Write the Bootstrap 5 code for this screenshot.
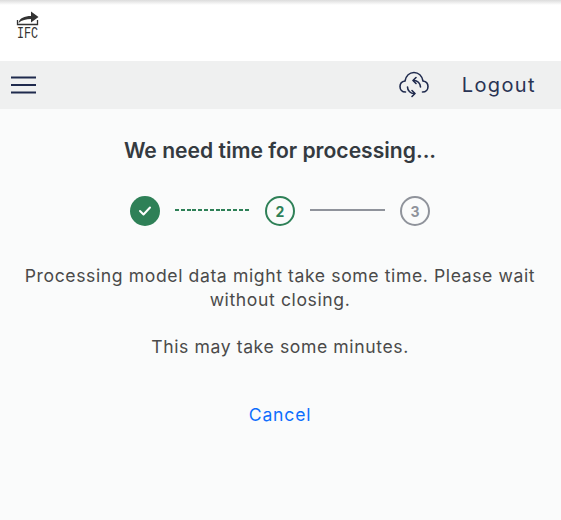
<!DOCTYPE html>
<html lang="en">
<head>
  <meta charset="UTF-8">
  <title>Processing</title>
  <meta name="viewport" content="width=device-width, initial-scale=1">
  <link href="https://cdn.jsdelivr.net/npm/bootstrap@5.3.3/dist/css/bootstrap.min.css" rel="stylesheet">
  <style>
    html, body {
      height: 520px;
      overflow: hidden;
    }

    body {
      font-family: Inter, "Liberation Sans", sans-serif;
      background-color: #fafbfb;
      color: #3b3b3b;
    }

    .top-strip {
      height: 61px;
      background: linear-gradient(#dcdcdc 0, #ffffff 5px);
      padding: 10px 0 0 15px;
    }

    .logo-mark {
      display: block;
      overflow: visible;
    }

    .menu-bar {
      height: 48px;
      background-color: #eff0f0;
      padding: 0 25px 0 11px;
    }

    .burger {
      width: 25px;
      height: 18px;
    }

    .sync-icon {
      width: 30px;
      height: 28px;
      margin-right: 33px;
    }

    .logout-link {
      font-size: 20px;
      letter-spacing: 1.4px;
      color: #2a3454;
      text-decoration: none;
    }

    .page-body {
      padding-right: 1px;
    }

    .page-title {
      font-size: 21.100px;
      font-weight: 600;
      color: #343a40;
      margin: 30px 0 33px;
      line-height: 24px;
    }

    .step-row {
      margin-bottom: 38px;
    }

    .step-dot {
      width: 30px;
      height: 30px;
      border-radius: 50%;
      font-size: 14px;
      font-weight: 700;
    }

    .step-done {
      background-color: #2e8057;
    }

    .step-active {
      border: 2px solid #2e8057;
      color: #2e8057;
    }

    .step-todo {
      border: 2px solid #8f939b;
      color: #8f939b;
    }

    .step-line {
      width: 75px;
      height: 2px;
      margin: 0 15px;
      background-color: #8f939b;
      position: relative;
      top: -1px;
    }

    .step-line-dashed {
      background: repeating-linear-gradient(90deg, #2e8057 0, #2e8057 4px, transparent 4px, transparent 5.800px);
    }

    .body-text {
      font-size: 17.600px;
      letter-spacing: .6px;
      line-height: 24px;
      color: #4a4a4a;
      padding: 0 20px;
    }

    .gap-text {
      margin-bottom: 23px;
    }

    .last-text {
      margin-bottom: 43px;
    }

    .cancel-link {
      font-size: 17.600px;
      letter-spacing: .8px;
      color: #0d6efd;
      text-decoration: none;
    }
  </style>
</head>
<body>

<div class="top-strip">
  <svg class="logo-mark" width="26" height="30" viewBox="0 0 26 30">
    <path d="M2.500 10v4.500h20V10" fill="none" stroke="#333" stroke-width="1.300"/>
    <path d="M3.500 13c1-5 6-7 12.500-7V1.500L23.500 7 16 12.500V9c-5 0-9 1-12.500 4z" fill="#333"/>
    <text x="2" y="28" font-family="Liberation Mono, monospace" font-size="16.500" textLength="21" lengthAdjust="spacingAndGlyphs" fill="#333">IFC</text>
  </svg>
</div>

<nav class="menu-bar d-flex align-items-center">
  <svg class="burger" viewBox="0 0 25 18">
    <path d="M0 1.500h25M0 9h25M0 16.500h25" stroke="#1f2a4d" stroke-width="2.200"/>
  </svg>
  <div class="ms-auto d-flex align-items-center">
    <svg class="sync-icon" viewBox="0 0 30 28" fill="none" stroke="#1f2a4d" stroke-width="1.600" stroke-linecap="round" stroke-linejoin="round">
      <path d="M6.500 21C3 21 1 18.500 1 15.500 1 12.500 3 10.500 6 10 7 5 10.500 1.500 15 1.500S23 5 24 10c3 .5 5 2.500 5 5.500S27 21 23.500 21"/>
      <path d="M14.500 9.500A6.500 6.500 0 0 1 21.500 16M15.500 22.500A6.500 6.500 0 0 1 8.500 16"/>
      <path d="M17 6.500l-3 3 3 3M13 25.500l3-3-3-3"/>
    </svg>
    <a href="#" class="logout-link">Logout</a>
  </div>
</nav>

<main class="page-body text-center">
  <h1 class="page-title">We need time for processing...</h1>

  <div class="step-row d-flex justify-content-center align-items-center">
    <div class="step-dot step-done d-flex align-items-center justify-content-center">
      <svg width="14" height="12" viewBox="0 0 14 12">
        <path d="M2 6l3.500 3.500L12 2.500" fill="none" stroke="#fff" stroke-width="2" stroke-linecap="round" stroke-linejoin="round"/>
      </svg>
    </div>
    <div class="step-line step-line-dashed"></div>
    <div class="step-dot step-active d-flex align-items-center justify-content-center">2</div>
    <div class="step-line"></div>
    <div class="step-dot step-todo d-flex align-items-center justify-content-center">3</div>
  </div>

  <p class="body-text gap-text">Processing model data might take some time. Please wait without closing.</p>
  <p class="body-text last-text">This may take some minutes.</p>
  <a href="#" class="cancel-link">Cancel</a>
</main>

<script src="https://cdn.jsdelivr.net/npm/bootstrap@5.3.3/dist/js/bootstrap.bundle.min.js"></script>
</body>
</html>
